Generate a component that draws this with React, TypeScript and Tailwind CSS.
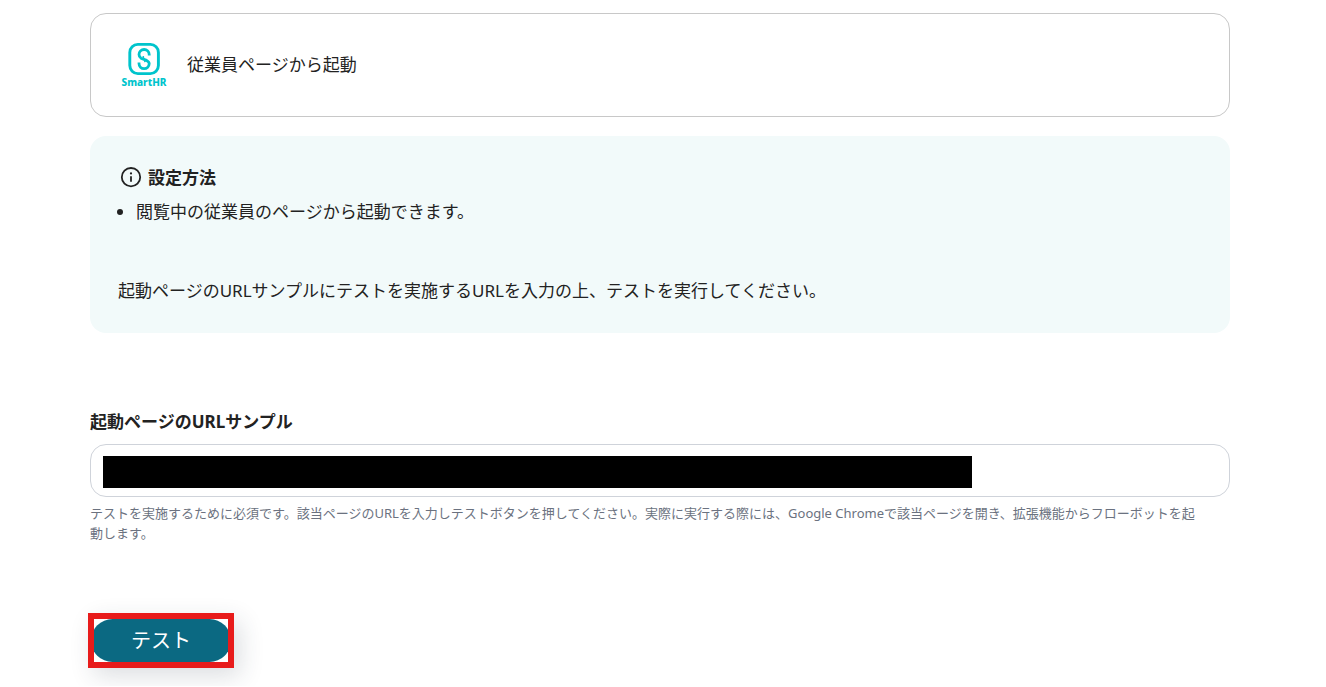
import { useId } from "react";

function SmartHRLogo() {
  return (
    <svg
      className="h-12 w-12 shrink-0"
      viewBox="0 0 48 48"
      fill="none"
      role="img"
      aria-label="SmartHR"
    >
      <rect x="10.8" y="3.4" width="28.6" height="29.2" rx="8" stroke="#00c4cc" strokeWidth="2.9" />
      <path
        d="M30.2 14.6V13.6A5.1 5.1 0 0 0 20 13.6C20 15.6 20.8 16.4 22 17.2L27.6 19.4C29.2 20.2 30.2 21 30.2 22.6A5.1 5.1 0 0 1 20 22.6V21.4"
        stroke="#00c4cc"
        strokeWidth="2.8"
      />
      <path d="M24.6 18.1L24.2 15.2M25.6 18.1L26 21.2" stroke="#00c4cc" strokeWidth="1.6" />
      <text
        x="25"
        y="45"
        textAnchor="middle"
        fontSize="10"
        fontWeight="800"
        fontFamily="'Noto Sans', sans-serif"
        fill="#00c4cc"
      >
        SmartHR
      </text>
    </svg>
  );
}

function InfoIcon() {
  return (
    <svg className="h-6 w-6 shrink-0" viewBox="0 0 24 24" fill="none" aria-hidden="true">
      <circle cx="13" cy="11.2" r="9.2" stroke="#222" strokeWidth="1.8" />
      <path d="M13 10.2v5.6" stroke="#222" strokeWidth="1.8" />
      <circle cx="13" cy="7.4" r="1.1" fill="#222" />
    </svg>
  );
}

export default function App() {
  const urlId = useId();
  const helpId = useId();

  return (
    <main
      className="bg-white pt-[13px] pr-24 pb-[18px] pl-[90px] font-['Noto_Sans','Noto_Sans_CJK_JP',sans-serif] text-[17px] leading-7 text-[#222]"
      lang="ja"
    >
      <section className="flex items-center gap-5 rounded-2xl border border-[#c8c8c8] px-7 py-[27px]">
        <SmartHRLogo />
        <p>従業員ページから起動</p>
      </section>

      <section className="mt-[19px] rounded-2xl bg-[#f2fafa] px-7 py-7">
        <h2 className="flex items-center gap-[6px] font-bold">
          <InfoIcon />
          設定方法
        </h2>
        <ul className="mt-[6px] list-disc pl-[18px]">
          <li>閲覧中の従業員のページから起動できます。</li>
        </ul>
        <p className="mt-[51px]">
          起動ページのURLサンプルにテストを実施するURLを入力の上、テストを実行してください。
        </p>
      </section>

      <form className="mt-[75px]" onSubmit={(event) => event.preventDefault()}>
        <label htmlFor={urlId} className="block font-bold">
          起動ページのURLサンプル
        </label>
        <div className="mt-2 rounded-2xl border border-[#cfd3da] px-3 pt-[11px] pb-2">
          <input
            id={urlId}
            type="text"
            aria-describedby={helpId}
            className="block h-8 w-[78%] bg-black px-2 text-black outline-none"
          />
        </div>
        <p id={helpId} className="mt-[6px] pr-6 text-[13px] leading-5 text-[#6b7280]">
          テストを実施するために必須です。該当ページのURLを入力しテストボタンを押してください。実際に実行する際には、Google
          Chromeで該当ページを開き、拡張機能からフローボットを起動します。
        </p>
        <div className="mt-[70px] -ml-[2px] w-fit overflow-hidden border-[6px] border-[#e81b1b] bg-white shadow-[6px_8px_24px_rgba(40,50,70,0.16)]">
          <button
            type="submit"
            className="-mx-[3px] block h-[43px] w-[140px] rounded-[22px] bg-[#0b6982] text-[20px] leading-7 text-white"
          >
            テスト
          </button>
        </div>
      </form>
    </main>
  );
}
